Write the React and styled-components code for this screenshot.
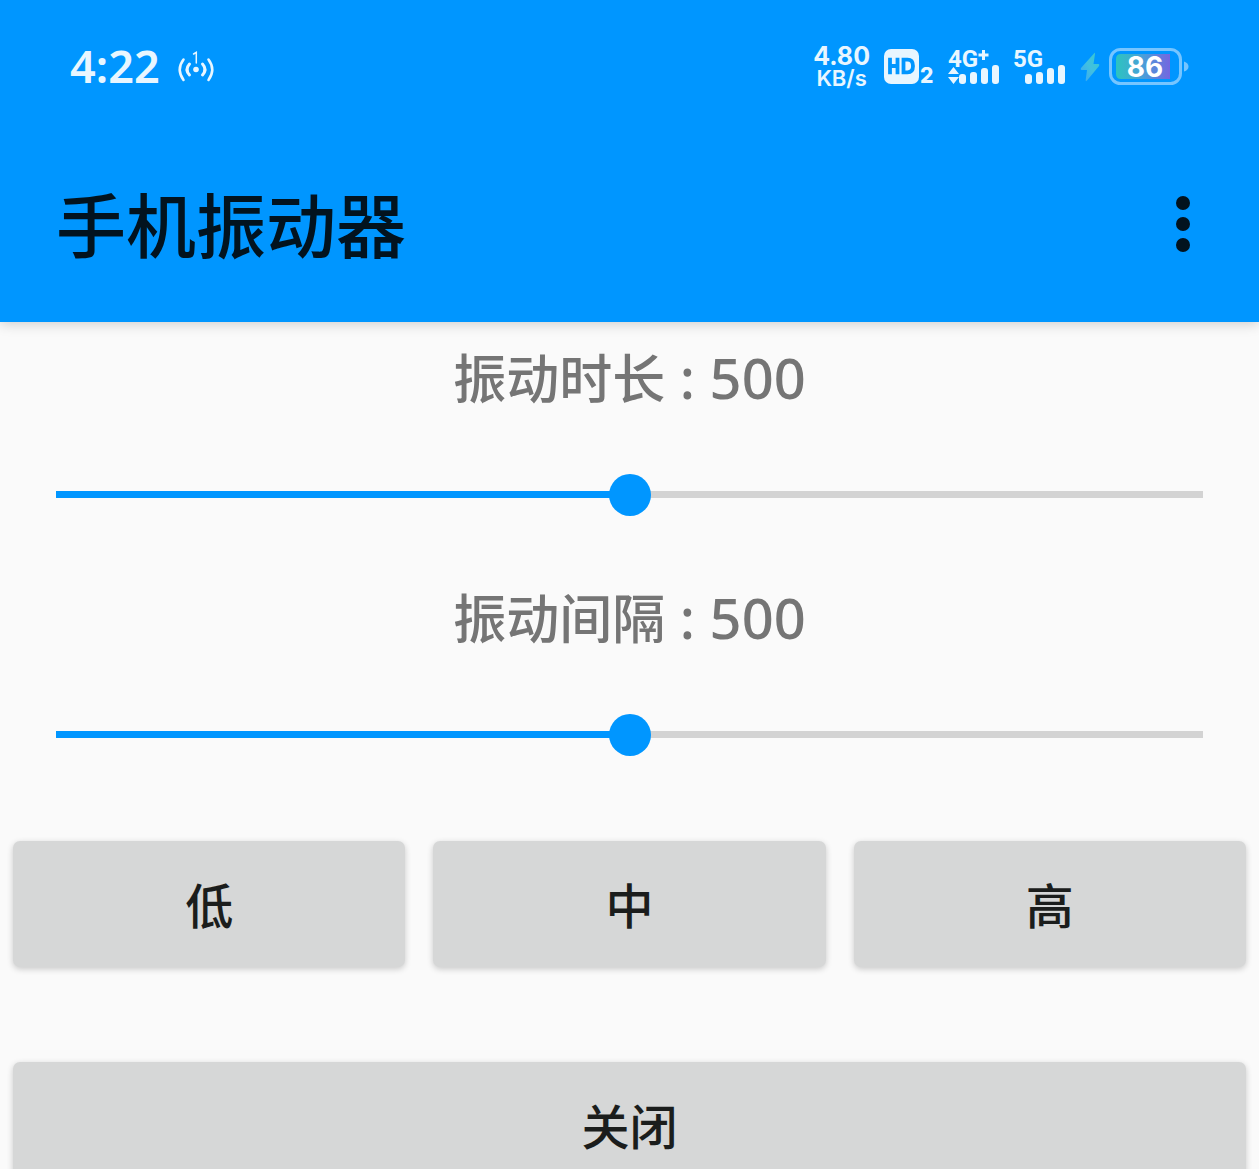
import React, { useState } from "react";
import styled, { createGlobalStyle } from "styled-components";

const BLUE = "#0096ff";
const STATUS = "#e8f6ff";

const GlobalStyle = createGlobalStyle`
  *, *::before, *::after { box-sizing: border-box; }
  body {
    margin: 0;
    background: #fafafa;
    font-family: "Noto Sans", "Noto Sans CJK SC", sans-serif;
  }
`;

const Screen = styled.div`
  height: 100vh;
  overflow: hidden;
  display: flex;
  flex-direction: column;
`;

const Header = styled.header`
  flex: none;
  background: ${BLUE};
  box-shadow: 0 2px 12px rgba(0, 0, 0, 0.18);
`;

const StatusBar = styled.div`
  display: flex;
  align-items: center;
  justify-content: space-between;
  height: 126px;
  padding: 8px 70px 0;
  color: ${STATUS};
`;

const StatusGroup = styled.div`
  display: flex;
  align-items: center;
  gap: ${(p) => p.$gap}px;
`;

const Clock = styled.time`
  padding-bottom: 2px;
  font-size: 45px;
  font-weight: 600;
  line-height: 48px;
`;

const Speed = styled.div`
  display: flex;
  flex-direction: column;
  align-items: center;
  font-family: Inter, sans-serif;
  font-weight: 700;
`;

const SpeedValue = styled.span`
  font-size: 25px;
  line-height: 22px;
`;

const SpeedUnit = styled.span`
  font-size: 22px;
  font-weight: 600;
  line-height: 22px;
`;

const Icon = styled.svg`
  display: block;
  flex: none;
  overflow: visible;
`;

const AppBar = styled.div`
  display: flex;
  align-items: center;
  justify-content: space-between;
  height: 196px;
  padding: 0 49px 0 56px;
`;

const Title = styled.h1`
  margin: 0;
  padding-bottom: 2px;
  font: 500 70px/104px "Noto Sans CJK SC", sans-serif;
  color: #02131f;
`;

const MenuButton = styled.button`
  display: flex;
  justify-content: center;
  padding: 20px;
  border: 0;
  background: none;
  color: #02131f;
  cursor: pointer;
`;

const Main = styled.main`
  flex: none;
`;

const Control = styled.div`
  display: flex;
  flex-direction: column;
  padding: 0 56px 47px;
`;

const ControlLabel = styled.label`
  margin-bottom: 43px;
  font-family: "Noto Sans CJK SC", sans-serif;
  font-size: 53px;
  font-weight: 500;
  line-height: 108px;
  text-align: center;
  color: #757575;
`;

const Value = styled.span`
  font-family: "Noto Sans", sans-serif;
  font-size: 56px;
  line-height: 56px;
  white-space: pre;
`;

const Slider = styled.input`
  appearance: none;
  width: 100%;
  height: 42px;
  margin: 0;
  background: none;
  cursor: pointer;

  &::-webkit-slider-runnable-track {
    height: 7px;
    background: linear-gradient(
      to right,
      ${BLUE} var(--filled),
      #d3d3d3 var(--filled)
    );
  }

  &::-webkit-slider-thumb {
    appearance: none;
    width: 42px;
    height: 42px;
    margin-top: -17px;
    border-radius: 50%;
    background: ${BLUE};
  }
`;

const Actions = styled.div`
  display: grid;
  grid-template-columns: repeat(${(p) => p.$columns}, 1fr);
  gap: 28px;
  padding: 0 13px;
  margin-top: ${(p) => p.$top}px;
`;

const ActionButton = styled.button`
  height: 126px;
  padding: 0 0 2px;
  border: 0;
  border-radius: 7px;
  background: #d6d7d7;
  box-shadow: 0 2px 6px rgba(0, 0, 0, 0.2);
  color: #1b1d1c;
  font: 500 48px/72px "Noto Sans CJK SC", sans-serif;
  cursor: pointer;
`;

const StatusText = styled.text`
  font-family: ${(p) => p.$family}, sans-serif;
  font-weight: ${(p) => p.$weight || 700};
`;

function HotspotIcon() {
  return (
    <Icon width="36" height="36" viewBox="0 0 36 36" fill="none" stroke={STATUS} strokeWidth="2.6" strokeLinecap="round" aria-label="1">
      <circle cx="18" cy="20.5" r="2.8" fill={STATUS} stroke="none" />
      <path d="M11.5 15Q6.5 20.5 11.5 26M24.5 15Q29.5 20.5 24.5 26" strokeWidth="3" />
      <path d="M5.5 10.5Q-2 20.5 5.5 31M30.5 10.5Q38 20.5 30.5 31" />
      <path d="M15.6 5L18.3 3.3V14" strokeWidth="1.5" />
    </Icon>
  );
}

function HdIcon() {
  return (
    <Icon width="50" height="36" viewBox="0 0 50 36">
      <rect x="0" y="0" width="35" height="35" rx="7" fill={STATUS} />
      <path
        d="M6 8.7V25.3M13.5 8.7V25.3M6 17H13.5M19.5 10.7V23.3H23.5Q29 23.3 29 17T23.5 10.7Z"
        fill="none"
        stroke={BLUE}
        strokeWidth="3.8"
      />
      <StatusText $family="Inter" $weight={800} x="36" y="34" fontSize="21" fill={STATUS}>2</StatusText>
    </Icon>
  );
}

function Bars({ x }) {
  return [10, 12, 16, 19].map((h, i) => (
    <rect key={h} x={x + i * 11} y={35 - h} width="7" height={h} rx="3" fill={STATUS} />
  ));
}

function Signal4G() {
  return (
    <Icon width="52" height="36" viewBox="0 0 52 36">
      <StatusText $family="Roboto" x="0" y="18" fontSize="24" fill={STATUS}>4G</StatusText>
      <path d="M35.5 1V11M30.5 6H40.5" stroke={STATUS} strokeWidth="3" />
      <path d="M0 25L5.5 18L11 25ZM0 28H11L5.5 35Z" fill={STATUS} />
      <Bars x={11} />
    </Icon>
  );
}

function Signal5G() {
  return (
    <Icon width="52" height="36" viewBox="0 0 52 36">
      <StatusText $family="Roboto" x="-1" y="18" fontSize="24" fill={STATUS}>5G</StatusText>
      <Bars x={11} />
    </Icon>
  );
}

function BoltIcon() {
  return (
    <Icon width="20" height="30" viewBox="0 0 20 30">
      <defs>
        <linearGradient id="bolt" x1="1" y1="0" x2="0" y2="1">
          <stop offset="0" stopColor="#35c8cf" />
          <stop offset="0.5" stopColor="#41c0e0" />
          <stop offset="1" stopColor="#3aa5f5" />
        </linearGradient>
      </defs>
      <path d="M14 1.5Q15 0 15 2L13.5 12H18.5Q20 12.5 19 14L7 28.5Q5.5 30 5.7 28L7 18H1.5Q0 17.5 1 16Z" fill="url(#bolt)" />
    </Icon>
  );
}

function BatteryIcon({ level }) {
  return (
    <Icon width="80" height="38" viewBox="0 0 80 38">
      <defs>
        <linearGradient id="charge">
          <stop offset="0" stopColor="#2cc4c0" />
          <stop offset="0.5" stopColor="#4a9fd8" />
          <stop offset="1" stopColor="#7466e0" />
        </linearGradient>
      </defs>
      <rect x="1.5" y="1.5" width="70" height="34" rx="10" fill="none" stroke="#76c5ff" strokeWidth="3" />
      <path d="M75 13.5Q79.5 15 79.5 18.5T75 23.5Z" fill="#76c5ff" />
      <path d="M12 6H61V31H12Q7 31 7 26V11Q7 6 12 6Z" fill="url(#charge)" />
      <StatusText $family="Inter" x="36" y="29" textAnchor="middle" fontSize="28" fill="#fff">{level}</StatusText>
    </Icon>
  );
}

function SliderControl({ id, name }) {
  const [value, setValue] = useState(500);
  return (
    <Control>
      <ControlLabel htmlFor={id}>
        {name}
        <Value>{` : ${value}`}</Value>
      </ControlLabel>
      <Slider
        id={id}
        type="range"
        min="0"
        max="1000"
        value={value}
        onChange={(e) => setValue(Number(e.target.value))}
        style={{ "--filled": `${value / 10}%` }}
      />
    </Control>
  );
}

export default function App() {
  return (
    <Screen>
      <GlobalStyle />
      <Header>
        <StatusBar>
          <StatusGroup $gap={18}>
            <Clock>4:22</Clock>
            <HotspotIcon />
          </StatusGroup>
          <StatusGroup $gap={14}>
            <Speed>
              <SpeedValue>4.80</SpeedValue>
              <SpeedUnit>KB/s</SpeedUnit>
            </Speed>
            <HdIcon />
            <Signal4G />
            <Signal5G />
            <StatusGroup $gap={9}>
              <BoltIcon />
              <BatteryIcon level={86} />
            </StatusGroup>
          </StatusGroup>
        </StatusBar>
        <AppBar>
          <Title>手机振动器</Title>
          <MenuButton type="button" aria-label="更多">
            <Icon width="14" height="56" viewBox="0 0 14 56" fill="currentColor">
              <circle cx="7" cy="7" r="7" />
              <circle cx="7" cy="28" r="7" />
              <circle cx="7" cy="49" r="7" />
            </Icon>
          </MenuButton>
        </AppBar>
      </Header>
      <Main>
        <SliderControl id="duration" name="振动时长" />
        <SliderControl id="interval" name="振动间隔" />
        <Actions $columns={3} $top={39}>
          <ActionButton type="button">低</ActionButton>
          <ActionButton type="button">中</ActionButton>
          <ActionButton type="button">高</ActionButton>
        </Actions>
        <Actions $columns={1} $top={95}>
          <ActionButton type="button">关闭</ActionButton>
        </Actions>
      </Main>
    </Screen>
  );
}
